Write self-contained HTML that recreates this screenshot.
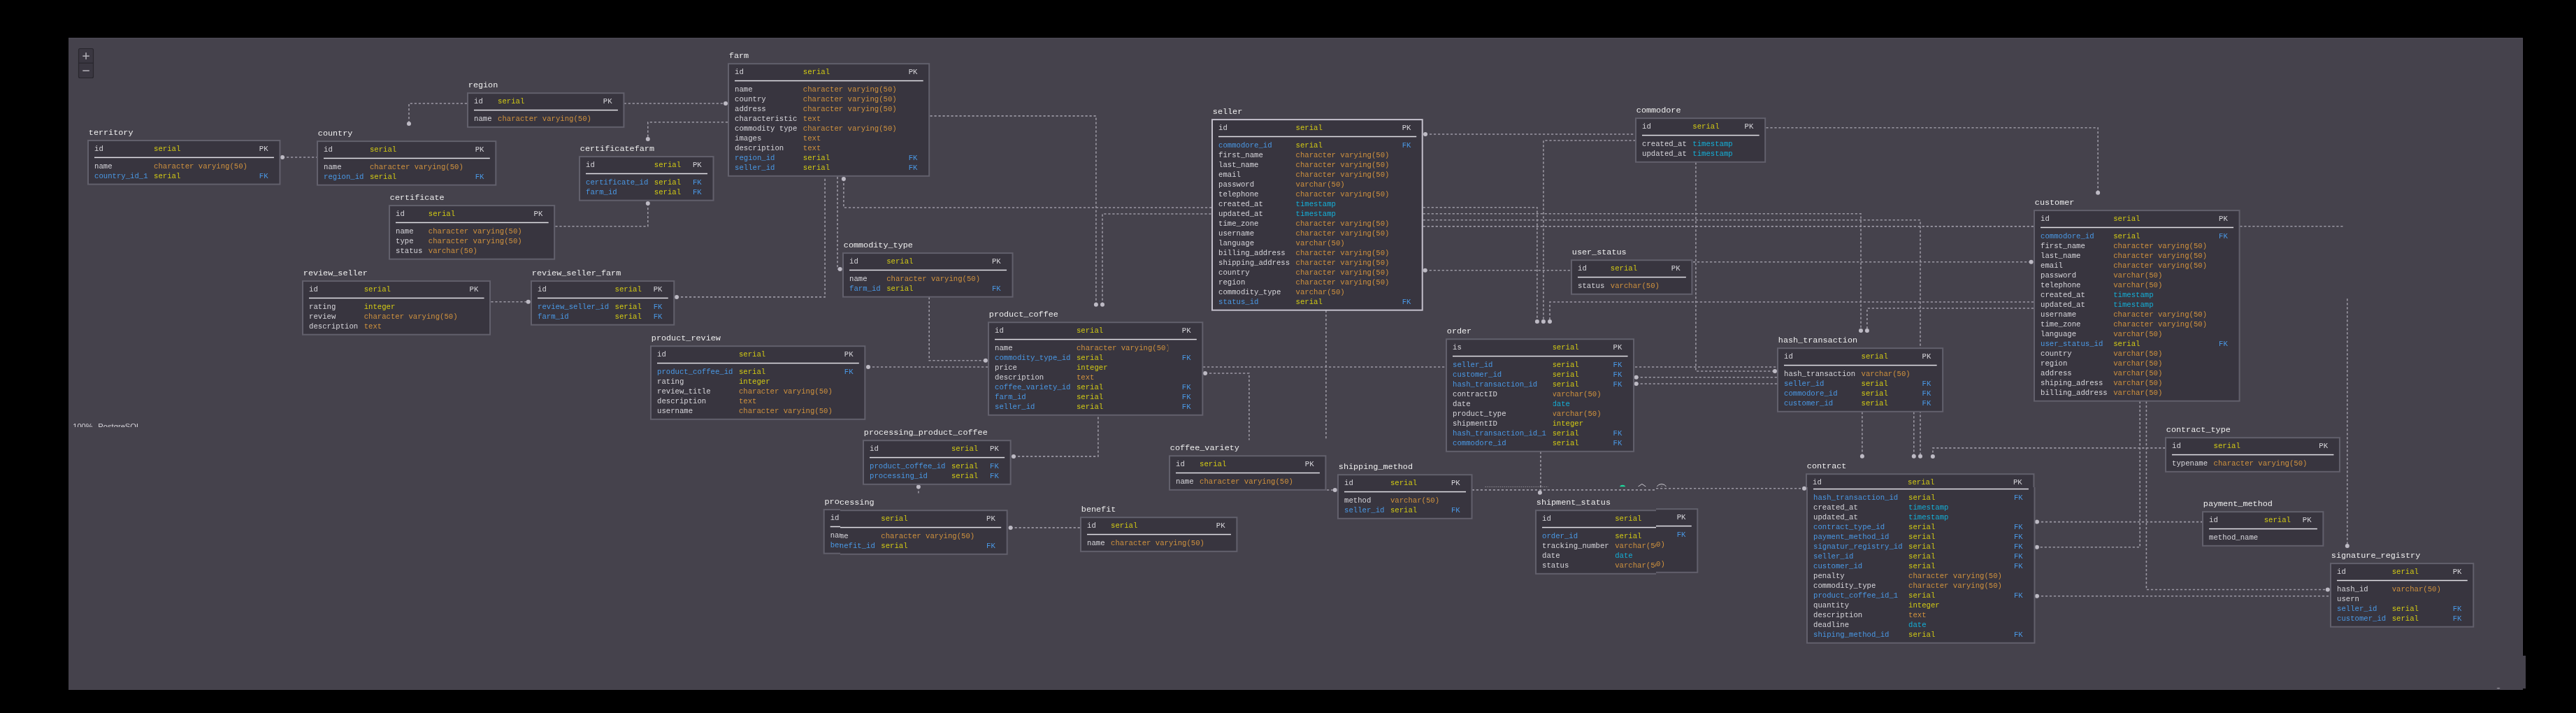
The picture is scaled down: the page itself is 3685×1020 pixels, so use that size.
<!DOCTYPE html>
<html><head><meta charset="utf-8"><style>
html,body{margin:0;padding:0;background:#000;overflow:hidden;}
svg{display:block;will-change:transform;}
text{font-family:"Liberation Mono",monospace;font-size:10.63px;white-space:pre;}
.tt{font-size:11.8px;fill:#eeeeee;}
</style></head><body>
<svg width="3685" height="1020" viewBox="0 0 3685 1020">
<rect x="0" y="0" width="3685" height="1020" fill="#000"/>
<rect x="98" y="54" width="3511" height="933" fill="#45424c"/>
<path d="M98 54.5 H3608.5 V938" fill="none" stroke="#4e4a56" stroke-width="1"/>
<ellipse cx="3574" cy="984.6" rx="2.5" ry="0.8" fill="#8e8b95"/>
<rect x="3609" y="938" width="4" height="47" fill="#45424c"/>
<g>
<rect x="112.5" y="69.5" width="21" height="42" rx="2" fill="#3a3741" stroke="#28262d" stroke-width="1.2"/>
<line x1="112.5" y1="90.2" x2="133.5" y2="90.2" stroke="#28262d" stroke-width="1.2"/>
<rect x="118.3" y="79.4" width="9.5" height="1.6" fill="#aeacb4"/><rect x="122.25" y="75.2" width="1.6" height="9.7" fill="#aeacb4"/>
<rect x="118.3" y="100.4" width="9.5" height="1.6" fill="#aeacb4"/>
</g>
<g fill="none" stroke="#9a97a2" stroke-width="1.6" stroke-dasharray="3.2 2.8"><path d="M404.0 225.0 L453.0 225.0"/>
<path d="M668.0 148.0 L585.0 148.0 L585.0 177.0"/>
<path d="M892.7 148.0 L1038.0 148.0"/>
<path d="M1041.0 174.8 L926.8 174.8 L926.8 199.0"/>
<path d="M926.8 291.0 L926.8 323.8 L793.6 323.8"/>
<path d="M702.4 431.8 L755.7 431.8"/>
<path d="M968.0 424.9 L1180.1 424.9 L1180.1 253.0"/>
<path d="M1198.0 253.0 L1198.0 385.0 L1201.7 385.0"/>
<path d="M1206.9 256.0 L1206.9 297.0 L1733.0 297.0"/>
<path d="M1329.2 425.0 L1329.2 515.8 L1409.9 515.8"/>
<path d="M1242.0 525.0 L1413.6 525.0"/>
<path d="M1450.0 652.9 L1570.9 652.9 L1570.9 594.0"/>
<path d="M1445.6 754.9 L1545.6 754.9"/>
<path d="M1313.9 696.4 L1313.9 708.0"/>
<path d="M1567.9 435.7 L1567.9 165.9 L1330.0 165.9"/>
<path d="M1577.0 435.7 L1577.0 306.0 L1733.0 306.0"/>
<path d="M1724.0 534.0 L1786.9 534.0 L1786.9 629.4"/>
<path d="M1896.9 444.0 L1896.9 627.8"/>
<path d="M1721.0 525.0 L2542.0 525.0"/>
<path d="M1898.0 701.0 L1909.7 701.0"/>
<path d="M2039.0 192.0 L2339.6 192.0"/>
<path d="M2038.7 386.8 L2247.5 386.8"/>
<path d="M2035.7 296.8 L2198.9 296.8 L2198.9 460.1"/>
<path d="M2339.6 201.0 L2207.9 201.0 L2207.9 460.1"/>
<path d="M2909.0 432.0 L2217.0 432.0 L2217.0 460.1"/>
<path d="M2035.7 305.8 L2662.0 305.8 L2662.0 473.1"/>
<path d="M2035.7 314.8 L2747.0 314.8 L2747.0 652.8"/>
<path d="M2035.7 323.9 L2909.0 323.9"/>
<path d="M2526.4 182.7 L3001.1 182.7 L3001.1 275.7"/>
<path d="M2422.0 374.8 L2905.6 374.8"/>
<path d="M2909.0 441.0 L2670.9 441.0 L2670.9 473.1"/>
<path d="M2425.9 232.2 L2425.9 531.0 L2539.0 531.0"/>
<path d="M2340.7 539.8 L2542.0 539.8"/>
<path d="M2340.7 549.0 L2542.0 549.0"/>
<path d="M2203.9 646.0 L2203.9 704.8"/>
<path d="M2105.8 700.9 L2369.0 700.9"/>
<path d="M2369.0 698.8 L2581.0 698.8"/>
<path d="M2663.9 589.3 L2663.9 652.8"/>
<path d="M2737.8 589.3 L2737.8 652.8"/>
<path d="M3097.4 640.9 L2764.9 640.9 L2764.9 652.9"/>
<path d="M3061.2 574.0 L3061.2 782.7 L2913.9 782.7"/>
<path d="M3070.4 574.0 L3070.4 843.5 L3329.8 843.5"/>
<path d="M2913.9 746.6 L3150.7 746.6"/>
<path d="M2913.9 852.8 L3333.4 852.8"/>
<path d="M3204.3 323.8 L3352.0 323.8"/>
<path d="M3357.8 427.2 L3357.8 780.9"/></g>
<g fill="#bdbac4"><circle cx="404.0" cy="225.0" r="3"/><circle cx="585.0" cy="177.0" r="3"/><circle cx="1038.0" cy="148.0" r="3"/><circle cx="926.8" cy="199.0" r="3"/><circle cx="926.8" cy="291.0" r="3"/><circle cx="755.7" cy="431.8" r="3"/><circle cx="968.0" cy="424.9" r="3"/><circle cx="1201.7" cy="385.0" r="3"/><circle cx="1206.9" cy="256.0" r="3"/><circle cx="1409.9" cy="515.8" r="3"/><circle cx="1242.0" cy="525.0" r="3"/><circle cx="1450.0" cy="652.9" r="3"/><circle cx="1445.6" cy="754.9" r="3"/><circle cx="1313.9" cy="696.4" r="3"/><circle cx="1567.9" cy="435.7" r="3"/><circle cx="1577.0" cy="435.7" r="3"/><circle cx="1724.0" cy="534.0" r="3"/><circle cx="1909.7" cy="701.0" r="3"/><circle cx="2039.0" cy="192.0" r="3"/><circle cx="2038.7" cy="386.8" r="3"/><circle cx="2198.9" cy="460.1" r="3"/><circle cx="2207.9" cy="460.1" r="3"/><circle cx="2217.0" cy="460.1" r="3"/><circle cx="2662.0" cy="473.1" r="3"/><circle cx="2747.0" cy="652.8" r="3"/><circle cx="3001.1" cy="275.7" r="3"/><circle cx="2905.6" cy="374.8" r="3"/><circle cx="2670.9" cy="473.1" r="3"/><circle cx="2539.0" cy="531.0" r="3"/><circle cx="2340.7" cy="539.8" r="3"/><circle cx="2340.7" cy="549.0" r="3"/><circle cx="2202.9" cy="704.8" r="3"/><circle cx="2581.0" cy="698.8" r="3"/><circle cx="2663.9" cy="652.8" r="3"/><circle cx="2737.8" cy="652.8" r="3"/><circle cx="2764.9" cy="652.9" r="3"/><circle cx="2913.9" cy="782.7" r="3"/><circle cx="3329.8" cy="843.5" r="3"/><circle cx="2913.9" cy="746.6" r="3"/><circle cx="2913.9" cy="852.8" r="3"/><circle cx="3357.8" cy="780.9" r="3"/></g>
<g>
<rect x="126.00" y="201.00" width="274.43" height="62.60" fill="#38353f" stroke="#62606c" stroke-width="2"/>
<text x="126.80" y="193.00" class="tt">territory</text>
<text x="135.00" y="215.80" fill="#d6d5da">id</text>
<text x="220.04" y="215.80" fill="#d2ca14">serial</text>
<text x="370.87" y="215.80" fill="#d6d5da">PK</text>
<rect x="135.00" y="224.60" width="256.93" height="1.5" fill="#e2e0e6"/>
<text x="135.00" y="240.70" fill="#d6d5da">name</text>
<text x="220.04" y="240.70" fill="#d0923e">character varying(50)</text>
<text x="135.00" y="254.70" fill="#4a98e4">country_id_1</text>
<text x="220.04" y="254.70" fill="#d2ca14">serial</text>
<text x="370.87" y="254.70" fill="#4a98e4">FK</text>
</g>
<g>
<rect x="454.00" y="202.10" width="255.30" height="62.60" fill="#38353f" stroke="#62606c" stroke-width="2"/>
<text x="454.80" y="194.10" class="tt">country</text>
<text x="463.00" y="216.90" fill="#d6d5da">id</text>
<text x="528.90" y="216.90" fill="#d2ca14">serial</text>
<text x="679.74" y="216.90" fill="#d6d5da">PK</text>
<rect x="463.00" y="225.70" width="237.80" height="1.5" fill="#e2e0e6"/>
<text x="463.00" y="241.80" fill="#d6d5da">name</text>
<text x="528.90" y="241.80" fill="#d0923e">character varying(50)</text>
<text x="463.00" y="255.80" fill="#4a98e4">region_id</text>
<text x="528.90" y="255.80" fill="#d2ca14">serial</text>
<text x="679.74" y="255.80" fill="#4a98e4">FK</text>
</g>
<g>
<rect x="669.00" y="133.20" width="223.41" height="48.60" fill="#38353f" stroke="#62606c" stroke-width="2"/>
<text x="669.80" y="125.20" class="tt">region</text>
<text x="678.00" y="148.00" fill="#d6d5da">id</text>
<text x="712.01" y="148.00" fill="#d2ca14">serial</text>
<text x="862.85" y="148.00" fill="#d6d5da">PK</text>
<rect x="678.00" y="156.80" width="205.91" height="1.5" fill="#e2e0e6"/>
<text x="678.00" y="172.90" fill="#d6d5da">name</text>
<text x="712.01" y="172.90" fill="#d0923e">character varying(50)</text>
</g>
<g>
<rect x="1042.00" y="91.20" width="287.19" height="160.60" fill="#38353f" stroke="#62606c" stroke-width="2"/>
<text x="1042.80" y="83.20" class="tt">farm</text>
<text x="1051.00" y="106.00" fill="#d6d5da">id</text>
<text x="1148.79" y="106.00" fill="#d2ca14">serial</text>
<text x="1299.63" y="106.00" fill="#d6d5da">PK</text>
<rect x="1051.00" y="114.80" width="269.69" height="1.5" fill="#e2e0e6"/>
<text x="1051.00" y="130.90" fill="#d6d5da">name</text>
<text x="1148.79" y="130.90" fill="#d0923e">character varying(50)</text>
<text x="1051.00" y="144.90" fill="#d6d5da">country</text>
<text x="1148.79" y="144.90" fill="#d0923e">character varying(50)</text>
<text x="1051.00" y="158.90" fill="#d6d5da">address</text>
<text x="1148.79" y="158.90" fill="#d0923e">character varying(50)</text>
<text x="1051.00" y="172.90" fill="#d6d5da">characteristic</text>
<text x="1148.79" y="172.90" fill="#d0923e">text</text>
<text x="1051.00" y="186.90" fill="#d6d5da">commodity type</text>
<text x="1148.79" y="186.90" fill="#d0923e">character varying(50)</text>
<text x="1051.00" y="200.90" fill="#d6d5da">images</text>
<text x="1148.79" y="200.90" fill="#d0923e">text</text>
<text x="1051.00" y="214.90" fill="#d6d5da">description</text>
<text x="1148.79" y="214.90" fill="#d0923e">text</text>
<text x="1051.00" y="228.90" fill="#4a98e4">region_id</text>
<text x="1148.79" y="228.90" fill="#d2ca14">serial</text>
<text x="1299.63" y="228.90" fill="#4a98e4">FK</text>
<text x="1051.00" y="242.90" fill="#4a98e4">seller_id</text>
<text x="1148.79" y="242.90" fill="#d2ca14">serial</text>
<text x="1299.63" y="242.90" fill="#4a98e4">FK</text>
</g>
<g>
<rect x="829.00" y="224.10" width="191.52" height="62.60" fill="#38353f" stroke="#62606c" stroke-width="2"/>
<text x="829.80" y="216.10" class="tt">certificatefarm</text>
<text x="838.00" y="238.90" fill="#d6d5da">id</text>
<text x="935.79" y="238.90" fill="#d2ca14">serial</text>
<text x="990.96" y="238.90" fill="#d6d5da">PK</text>
<rect x="838.00" y="247.70" width="174.02" height="1.5" fill="#e2e0e6"/>
<text x="838.00" y="263.80" fill="#4a98e4">certificate_id</text>
<text x="935.79" y="263.80" fill="#d2ca14">serial</text>
<text x="990.96" y="263.80" fill="#4a98e4">FK</text>
<text x="838.00" y="277.80" fill="#4a98e4">farm_id</text>
<text x="935.79" y="277.80" fill="#d2ca14">serial</text>
<text x="990.96" y="277.80" fill="#4a98e4">FK</text>
</g>
<g>
<rect x="557.00" y="294.10" width="236.16" height="76.60" fill="#38353f" stroke="#62606c" stroke-width="2"/>
<text x="557.80" y="286.10" class="tt">certificate</text>
<text x="566.00" y="308.90" fill="#d6d5da">id</text>
<text x="612.77" y="308.90" fill="#d2ca14">serial</text>
<text x="763.61" y="308.90" fill="#d6d5da">PK</text>
<rect x="566.00" y="317.70" width="218.66" height="1.5" fill="#e2e0e6"/>
<text x="566.00" y="333.80" fill="#d6d5da">name</text>
<text x="612.77" y="333.80" fill="#d0923e">character varying(50)</text>
<text x="566.00" y="347.80" fill="#d6d5da">type</text>
<text x="612.77" y="347.80" fill="#d0923e">character varying(50)</text>
<text x="566.00" y="361.80" fill="#d6d5da">status</text>
<text x="612.77" y="361.80" fill="#d0923e">varchar(50)</text>
</g>
<g>
<rect x="433.00" y="402.10" width="268.05" height="76.60" fill="#38353f" stroke="#62606c" stroke-width="2"/>
<text x="433.80" y="394.10" class="tt">review_seller</text>
<text x="442.00" y="416.90" fill="#d6d5da">id</text>
<text x="520.66" y="416.90" fill="#d2ca14">serial</text>
<text x="671.50" y="416.90" fill="#d6d5da">PK</text>
<rect x="442.00" y="425.70" width="250.55" height="1.5" fill="#e2e0e6"/>
<text x="442.00" y="441.80" fill="#d6d5da">rating</text>
<text x="520.66" y="441.80" fill="#d2ca14">integer</text>
<text x="442.00" y="455.80" fill="#d6d5da">review</text>
<text x="520.66" y="455.80" fill="#d0923e">character varying(50)</text>
<text x="442.00" y="469.80" fill="#d6d5da">description</text>
<text x="520.66" y="469.80" fill="#d0923e">text</text>
</g>
<g>
<rect x="760.00" y="402.10" width="204.27" height="62.60" fill="#38353f" stroke="#62606c" stroke-width="2"/>
<text x="760.80" y="394.10" class="tt">review_seller_farm</text>
<text x="769.00" y="416.90" fill="#d6d5da">id</text>
<text x="879.55" y="416.90" fill="#d2ca14">serial</text>
<text x="934.72" y="416.90" fill="#d6d5da">PK</text>
<rect x="769.00" y="425.70" width="186.77" height="1.5" fill="#e2e0e6"/>
<text x="769.00" y="441.80" fill="#4a98e4">review_seller_id</text>
<text x="879.55" y="441.80" fill="#d2ca14">serial</text>
<text x="934.72" y="441.80" fill="#4a98e4">FK</text>
<text x="769.00" y="455.80" fill="#4a98e4">farm_id</text>
<text x="879.55" y="455.80" fill="#d2ca14">serial</text>
<text x="934.72" y="455.80" fill="#4a98e4">FK</text>
</g>
<g>
<rect x="1206.00" y="362.10" width="242.54" height="62.60" fill="#38353f" stroke="#62606c" stroke-width="2"/>
<text x="1206.80" y="354.10" class="tt">commodity_type</text>
<text x="1215.00" y="376.90" fill="#d6d5da">id</text>
<text x="1268.15" y="376.90" fill="#d2ca14">serial</text>
<text x="1418.98" y="376.90" fill="#d6d5da">PK</text>
<rect x="1215.00" y="385.70" width="225.04" height="1.5" fill="#e2e0e6"/>
<text x="1215.00" y="401.80" fill="#d6d5da">name</text>
<text x="1268.15" y="401.80" fill="#d0923e">character varying(50)</text>
<text x="1215.00" y="415.80" fill="#4a98e4">farm_id</text>
<text x="1268.15" y="415.80" fill="#d2ca14">serial</text>
<text x="1418.98" y="415.80" fill="#4a98e4">FK</text>
</g>
<g>
<rect x="931.00" y="495.20" width="306.32" height="104.60" fill="#38353f" stroke="#62606c" stroke-width="2"/>
<text x="931.80" y="487.20" class="tt">product_review</text>
<text x="940.00" y="510.00" fill="#d6d5da">id</text>
<text x="1056.93" y="510.00" fill="#d2ca14">serial</text>
<text x="1207.76" y="510.00" fill="#d6d5da">PK</text>
<rect x="940.00" y="518.80" width="288.82" height="1.5" fill="#e2e0e6"/>
<text x="940.00" y="534.90" fill="#4a98e4">product_coffee_id</text>
<text x="1056.93" y="534.90" fill="#d2ca14">serial</text>
<text x="1207.76" y="534.90" fill="#4a98e4">FK</text>
<text x="940.00" y="548.90" fill="#d6d5da">rating</text>
<text x="1056.93" y="548.90" fill="#d2ca14">integer</text>
<text x="940.00" y="562.90" fill="#d6d5da">review_title</text>
<text x="1056.93" y="562.90" fill="#d0923e">character varying(50)</text>
<text x="940.00" y="576.90" fill="#d6d5da">description</text>
<text x="1056.93" y="576.90" fill="#d0923e">text</text>
<text x="940.00" y="590.90" fill="#d6d5da">username</text>
<text x="1056.93" y="590.90" fill="#d0923e">character varying(50)</text>
</g>
<g>
<rect x="1414.00" y="461.20" width="306.32" height="132.60" fill="#38353f" stroke="#62606c" stroke-width="2"/>
<text x="1414.80" y="453.20" class="tt">product_coffee</text>
<text x="1423.00" y="476.00" fill="#d6d5da">id</text>
<text x="1539.93" y="476.00" fill="#d2ca14">serial</text>
<text x="1690.76" y="476.00" fill="#d6d5da">PK</text>
<rect x="1423.00" y="484.80" width="288.82" height="1.5" fill="#e2e0e6"/>
<text x="1423.00" y="500.90" fill="#d6d5da">name</text>
<text x="1539.93" y="500.90" fill="#d0923e">character varying(50)</text>
<text x="1423.00" y="514.90" fill="#4a98e4">commodity_type_id</text>
<text x="1539.93" y="514.90" fill="#d2ca14">serial</text>
<text x="1690.76" y="514.90" fill="#4a98e4">FK</text>
<text x="1423.00" y="528.90" fill="#d6d5da">price</text>
<text x="1539.93" y="528.90" fill="#d2ca14">integer</text>
<text x="1423.00" y="542.90" fill="#d6d5da">description</text>
<text x="1539.93" y="542.90" fill="#d0923e">text</text>
<text x="1423.00" y="556.90" fill="#4a98e4">coffee_variety_id</text>
<text x="1539.93" y="556.90" fill="#d2ca14">serial</text>
<text x="1690.76" y="556.90" fill="#4a98e4">FK</text>
<text x="1423.00" y="570.90" fill="#4a98e4">farm_id</text>
<text x="1539.93" y="570.90" fill="#d2ca14">serial</text>
<text x="1690.76" y="570.90" fill="#4a98e4">FK</text>
<text x="1423.00" y="584.90" fill="#4a98e4">seller_id</text>
<text x="1539.93" y="584.90" fill="#d2ca14">serial</text>
<text x="1690.76" y="584.90" fill="#4a98e4">FK</text>
</g>
<g>
<rect x="1235.00" y="630.20" width="210.65" height="62.60" fill="#38353f" stroke="#62606c" stroke-width="2"/>
<text x="1235.80" y="622.20" class="tt">processing_product_coffee</text>
<text x="1244.00" y="645.00" fill="#d6d5da">id</text>
<text x="1360.93" y="645.00" fill="#d2ca14">serial</text>
<text x="1416.09" y="645.00" fill="#d6d5da">PK</text>
<rect x="1244.00" y="653.80" width="193.15" height="1.5" fill="#e2e0e6"/>
<text x="1244.00" y="669.90" fill="#4a98e4">product_coffee_id</text>
<text x="1360.93" y="669.90" fill="#d2ca14">serial</text>
<text x="1416.09" y="669.90" fill="#4a98e4">FK</text>
<text x="1244.00" y="683.90" fill="#4a98e4">processing_id</text>
<text x="1360.93" y="683.90" fill="#d2ca14">serial</text>
<text x="1416.09" y="683.90" fill="#4a98e4">FK</text>
</g>
<defs><g id="t_processing">
<rect x="1179.00" y="730.20" width="261.67" height="62.60" fill="#38353f" stroke="#62606c" stroke-width="2"/>
<text x="1179.80" y="722.20" class="tt">processing</text>
<text x="1188.00" y="745.00" fill="#d6d5da">id</text>
<text x="1260.28" y="745.00" fill="#d2ca14">serial</text>
<text x="1411.12" y="745.00" fill="#d6d5da">PK</text>
<rect x="1188.00" y="753.80" width="244.17" height="1.5" fill="#e2e0e6"/>
<text x="1188.00" y="769.90" fill="#d6d5da">name</text>
<text x="1260.28" y="769.90" fill="#d0923e">character varying(50)</text>
<text x="1188.00" y="783.90" fill="#4a98e4">benefit_id</text>
<text x="1260.28" y="783.90" fill="#d2ca14">serial</text>
<text x="1411.12" y="783.90" fill="#4a98e4">FK</text>
</g></defs>
<clipPath id="t_processing_c0"><rect x="1100" y="650" width="102" height="200"/></clipPath>
<g clip-path="url(#t_processing_c0)"><use href="#t_processing" transform="translate(-0.3 -1.1)"/></g>
<clipPath id="t_processing_c1"><rect x="1202" y="650" width="300" height="200"/></clipPath>
<g clip-path="url(#t_processing_c1)"><use href="#t_processing" transform="translate(0 0)"/></g>
<g>
<rect x="1546.00" y="740.20" width="223.41" height="48.60" fill="#38353f" stroke="#62606c" stroke-width="2"/>
<text x="1546.80" y="732.20" class="tt">benefit</text>
<text x="1555.00" y="755.00" fill="#d6d5da">id</text>
<text x="1589.01" y="755.00" fill="#d2ca14">serial</text>
<text x="1739.85" y="755.00" fill="#d6d5da">PK</text>
<rect x="1555.00" y="763.80" width="205.91" height="1.5" fill="#e2e0e6"/>
<text x="1555.00" y="779.90" fill="#d6d5da">name</text>
<text x="1589.01" y="779.90" fill="#d0923e">character varying(50)</text>
</g>
<g>
<rect x="1673.00" y="652.20" width="223.41" height="48.60" fill="#38353f" stroke="#62606c" stroke-width="2"/>
<text x="1673.80" y="644.20" class="tt">coffee_variety</text>
<text x="1682.00" y="667.00" fill="#d6d5da">id</text>
<text x="1716.01" y="667.00" fill="#d2ca14">serial</text>
<text x="1866.85" y="667.00" fill="#d6d5da">PK</text>
<rect x="1682.00" y="675.80" width="205.91" height="1.5" fill="#e2e0e6"/>
<text x="1682.00" y="691.90" fill="#d6d5da">name</text>
<text x="1716.01" y="691.90" fill="#d0923e">character varying(50)</text>
</g>
<g>
<rect x="1914.00" y="679.20" width="191.52" height="62.60" fill="#38353f" stroke="#62606c" stroke-width="2"/>
<text x="1914.80" y="671.20" class="tt">shipping_method</text>
<text x="1923.00" y="694.00" fill="#d6d5da">id</text>
<text x="1988.90" y="694.00" fill="#d2ca14">serial</text>
<text x="2075.96" y="694.00" fill="#d6d5da">PK</text>
<rect x="1923.00" y="702.80" width="174.02" height="1.5" fill="#e2e0e6"/>
<text x="1923.00" y="718.90" fill="#d6d5da">method</text>
<text x="1988.90" y="718.90" fill="#d0923e">varchar(50)</text>
<text x="1923.00" y="732.90" fill="#4a98e4">seller_id</text>
<text x="1988.90" y="732.90" fill="#d2ca14">serial</text>
<text x="2075.96" y="732.90" fill="#4a98e4">FK</text>
</g>
<g>
<rect x="1734.00" y="171.10" width="300.70" height="272.60" fill="#38353f" stroke="#c4c0cc" stroke-width="2"/>
<text x="1734.80" y="163.10" class="tt">seller</text>
<text x="1743.00" y="185.90" fill="#d6d5da">id</text>
<text x="1853.55" y="185.90" fill="#d2ca14">serial</text>
<text x="2005.70" y="185.90" fill="#d6d5da">PK</text>
<rect x="1743.00" y="194.70" width="283.20" height="1.5" fill="#e2e0e6"/>
<text x="1743.00" y="210.80" fill="#4a98e4">commodore_id</text>
<text x="1853.55" y="210.80" fill="#d2ca14">serial</text>
<text x="2005.70" y="210.80" fill="#4a98e4">FK</text>
<text x="1743.00" y="224.80" fill="#d6d5da">first_name</text>
<text x="1853.55" y="224.80" fill="#d0923e">character varying(50)</text>
<text x="1743.00" y="238.80" fill="#d6d5da">last_name</text>
<text x="1853.55" y="238.80" fill="#d0923e">character varying(50)</text>
<text x="1743.00" y="252.80" fill="#d6d5da">email</text>
<text x="1853.55" y="252.80" fill="#d0923e">character varying(50)</text>
<text x="1743.00" y="266.80" fill="#d6d5da">password</text>
<text x="1853.55" y="266.80" fill="#d0923e">varchar(50)</text>
<text x="1743.00" y="280.80" fill="#d6d5da">telephone</text>
<text x="1853.55" y="280.80" fill="#d0923e">character varying(50)</text>
<text x="1743.00" y="294.80" fill="#d6d5da">created_at</text>
<text x="1853.55" y="294.80" fill="#14aed6">timestamp</text>
<text x="1743.00" y="308.80" fill="#d6d5da">updated_at</text>
<text x="1853.55" y="308.80" fill="#14aed6">timestamp</text>
<text x="1743.00" y="322.80" fill="#d6d5da">time_zone</text>
<text x="1853.55" y="322.80" fill="#d0923e">character varying(50)</text>
<text x="1743.00" y="336.80" fill="#d6d5da">username</text>
<text x="1853.55" y="336.80" fill="#d0923e">character varying(50)</text>
<text x="1743.00" y="350.80" fill="#d6d5da">language</text>
<text x="1853.55" y="350.80" fill="#d0923e">varchar(50)</text>
<text x="1743.00" y="364.80" fill="#d6d5da">billing_address</text>
<text x="1853.55" y="364.80" fill="#d0923e">character varying(50)</text>
<text x="1743.00" y="378.80" fill="#d6d5da">shipping_address</text>
<text x="1853.55" y="378.80" fill="#d0923e">character varying(50)</text>
<text x="1743.00" y="392.80" fill="#d6d5da">country</text>
<text x="1853.55" y="392.80" fill="#d0923e">character varying(50)</text>
<text x="1743.00" y="406.80" fill="#d6d5da">region</text>
<text x="1853.55" y="406.80" fill="#d0923e">character varying(50)</text>
<text x="1743.00" y="420.80" fill="#d6d5da">commodity_type</text>
<text x="1853.55" y="420.80" fill="#d0923e">varchar(50)</text>
<text x="1743.00" y="434.80" fill="#4a98e4">status_id</text>
<text x="1853.55" y="434.80" fill="#d2ca14">serial</text>
<text x="2005.70" y="434.80" fill="#4a98e4">FK</text>
</g>
<g>
<rect x="2069.00" y="485.20" width="268.05" height="160.60" fill="#38353f" stroke="#62606c" stroke-width="2"/>
<text x="2069.80" y="477.20" class="tt">order</text>
<text x="2078.00" y="500.00" fill="#d6d5da">is</text>
<text x="2220.44" y="500.00" fill="#d2ca14">serial</text>
<text x="2307.50" y="500.00" fill="#d6d5da">PK</text>
<rect x="2078.00" y="508.80" width="250.55" height="1.5" fill="#e2e0e6"/>
<text x="2078.00" y="524.90" fill="#4a98e4">seller_id</text>
<text x="2220.44" y="524.90" fill="#d2ca14">serial</text>
<text x="2307.50" y="524.90" fill="#4a98e4">FK</text>
<text x="2078.00" y="538.90" fill="#4a98e4">customer_id</text>
<text x="2220.44" y="538.90" fill="#d2ca14">serial</text>
<text x="2307.50" y="538.90" fill="#4a98e4">FK</text>
<text x="2078.00" y="552.90" fill="#4a98e4">hash_transaction_id</text>
<text x="2220.44" y="552.90" fill="#d2ca14">serial</text>
<text x="2307.50" y="552.90" fill="#4a98e4">FK</text>
<text x="2078.00" y="566.90" fill="#d6d5da">contractID</text>
<text x="2220.44" y="566.90" fill="#d0923e">varchar(50)</text>
<text x="2078.00" y="580.90" fill="#d6d5da">date</text>
<text x="2220.44" y="580.90" fill="#14aed6">date</text>
<text x="2078.00" y="594.90" fill="#d6d5da">product_type</text>
<text x="2220.44" y="594.90" fill="#d0923e">varchar(50)</text>
<text x="2078.00" y="608.90" fill="#d6d5da">shipmentID</text>
<text x="2220.44" y="608.90" fill="#d2ca14">integer</text>
<text x="2078.00" y="622.90" fill="#4a98e4">hash_transaction_id_1</text>
<text x="2220.44" y="622.90" fill="#d2ca14">serial</text>
<text x="2307.50" y="622.90" fill="#4a98e4">FK</text>
<text x="2078.00" y="636.90" fill="#4a98e4">commodore_id</text>
<text x="2220.44" y="636.90" fill="#d2ca14">serial</text>
<text x="2307.50" y="636.90" fill="#4a98e4">FK</text>
</g>
<defs><g id="t_shipment_status">
<rect x="2197.00" y="730.20" width="229.78" height="90.60" fill="#38353f" stroke="#62606c" stroke-width="2"/>
<text x="2197.80" y="722.20" class="tt">shipment_status</text>
<text x="2206.00" y="745.00" fill="#d6d5da">id</text>
<text x="2310.17" y="745.00" fill="#d2ca14">serial</text>
<text x="2397.23" y="745.00" fill="#d6d5da">PK</text>
<rect x="2206.00" y="753.80" width="212.28" height="1.5" fill="#e2e0e6"/>
<text x="2206.00" y="769.90" fill="#4a98e4">order_id</text>
<text x="2310.17" y="769.90" fill="#d2ca14">serial</text>
<text x="2397.23" y="769.90" fill="#4a98e4">FK</text>
<text x="2206.00" y="783.90" fill="#d6d5da">tracking_number</text>
<text x="2310.17" y="783.90" fill="#d0923e">varchar(50)</text>
<text x="2206.00" y="797.90" fill="#d6d5da">date</text>
<text x="2310.17" y="797.90" fill="#14aed6">date</text>
<text x="2206.00" y="811.90" fill="#d6d5da">status</text>
<text x="2310.17" y="811.90" fill="#d0923e">varchar(50)</text>
</g></defs>
<clipPath id="t_shipment_status_c0"><rect x="2100" y="600" width="269" height="300"/></clipPath>
<g clip-path="url(#t_shipment_status_c0)"><use href="#t_shipment_status" transform="translate(0 0)"/></g>
<clipPath id="t_shipment_status_c1"><rect x="2369" y="600" width="200" height="300"/></clipPath>
<g clip-path="url(#t_shipment_status_c1)"><use href="#t_shipment_status" transform="translate(1.5 -2)"/></g>
<g>
<rect x="2340.00" y="169.20" width="185.14" height="62.60" fill="#38353f" stroke="#62606c" stroke-width="2"/>
<text x="2340.80" y="161.20" class="tt">commodore</text>
<text x="2349.00" y="184.00" fill="#d6d5da">id</text>
<text x="2421.28" y="184.00" fill="#d2ca14">serial</text>
<text x="2495.58" y="184.00" fill="#d6d5da">PK</text>
<rect x="2349.00" y="192.80" width="167.64" height="1.5" fill="#e2e0e6"/>
<text x="2349.00" y="208.90" fill="#d6d5da">created_at</text>
<text x="2421.28" y="208.90" fill="#14aed6">timestamp</text>
<text x="2349.00" y="222.90" fill="#d6d5da">updated_at</text>
<text x="2421.28" y="222.90" fill="#14aed6">timestamp</text>
</g>
<g>
<rect x="2248.00" y="372.20" width="172.38" height="48.60" fill="#38353f" stroke="#62606c" stroke-width="2"/>
<text x="2248.80" y="364.20" class="tt">user_status</text>
<text x="2257.00" y="387.00" fill="#d6d5da">id</text>
<text x="2303.77" y="387.00" fill="#d2ca14">serial</text>
<text x="2390.83" y="387.00" fill="#d6d5da">PK</text>
<rect x="2257.00" y="395.80" width="154.88" height="1.5" fill="#e2e0e6"/>
<text x="2257.00" y="411.90" fill="#d6d5da">status</text>
<text x="2303.77" y="411.90" fill="#d0923e">varchar(50)</text>
</g>
<g>
<rect x="2543.00" y="498.20" width="236.16" height="90.60" fill="#38353f" stroke="#62606c" stroke-width="2"/>
<text x="2543.80" y="490.20" class="tt">hash_transaction</text>
<text x="2552.00" y="513.00" fill="#d6d5da">id</text>
<text x="2662.55" y="513.00" fill="#d2ca14">serial</text>
<text x="2749.61" y="513.00" fill="#d6d5da">PK</text>
<rect x="2552.00" y="521.80" width="218.66" height="1.5" fill="#e2e0e6"/>
<text x="2552.00" y="537.90" fill="#d6d5da">hash_transaction</text>
<text x="2662.55" y="537.90" fill="#d0923e">varchar(50)</text>
<text x="2552.00" y="551.90" fill="#4a98e4">seller_id</text>
<text x="2662.55" y="551.90" fill="#d2ca14">serial</text>
<text x="2749.61" y="551.90" fill="#4a98e4">FK</text>
<text x="2552.00" y="565.90" fill="#4a98e4">commodore_id</text>
<text x="2662.55" y="565.90" fill="#d2ca14">serial</text>
<text x="2749.61" y="565.90" fill="#4a98e4">FK</text>
<text x="2552.00" y="579.90" fill="#4a98e4">customer_id</text>
<text x="2662.55" y="579.90" fill="#d2ca14">serial</text>
<text x="2749.61" y="579.90" fill="#4a98e4">FK</text>
</g>
<g>
<rect x="2910.00" y="301.10" width="293.56" height="272.60" fill="#38353f" stroke="#62606c" stroke-width="2"/>
<text x="2910.80" y="293.10" class="tt">customer</text>
<text x="2919.00" y="315.90" fill="#d6d5da">id</text>
<text x="3023.17" y="315.90" fill="#d2ca14">serial</text>
<text x="3174.01" y="315.90" fill="#d6d5da">PK</text>
<rect x="2919.00" y="324.70" width="276.06" height="1.5" fill="#e2e0e6"/>
<text x="2919.00" y="340.80" fill="#4a98e4">commodore_id</text>
<text x="3023.17" y="340.80" fill="#d2ca14">serial</text>
<text x="3174.01" y="340.80" fill="#4a98e4">FK</text>
<text x="2919.00" y="354.80" fill="#d6d5da">first_name</text>
<text x="3023.17" y="354.80" fill="#d0923e">character varying(50)</text>
<text x="2919.00" y="368.80" fill="#d6d5da">last_name</text>
<text x="3023.17" y="368.80" fill="#d0923e">character varying(50)</text>
<text x="2919.00" y="382.80" fill="#d6d5da">email</text>
<text x="3023.17" y="382.80" fill="#d0923e">character varying(50)</text>
<text x="2919.00" y="396.80" fill="#d6d5da">password</text>
<text x="3023.17" y="396.80" fill="#d0923e">varchar(50)</text>
<text x="2919.00" y="410.80" fill="#d6d5da">telephone</text>
<text x="3023.17" y="410.80" fill="#d0923e">varchar(50)</text>
<text x="2919.00" y="424.80" fill="#d6d5da">created_at</text>
<text x="3023.17" y="424.80" fill="#14aed6">timestamp</text>
<text x="2919.00" y="438.80" fill="#d6d5da">updated_at</text>
<text x="3023.17" y="438.80" fill="#14aed6">timestamp</text>
<text x="2919.00" y="452.80" fill="#d6d5da">username</text>
<text x="3023.17" y="452.80" fill="#d0923e">character varying(50)</text>
<text x="2919.00" y="466.80" fill="#d6d5da">time_zone</text>
<text x="3023.17" y="466.80" fill="#d0923e">character varying(50)</text>
<text x="2919.00" y="480.80" fill="#d6d5da">language</text>
<text x="3023.17" y="480.80" fill="#d0923e">varchar(50)</text>
<text x="2919.00" y="494.80" fill="#4a98e4">user_status_id</text>
<text x="3023.17" y="494.80" fill="#d2ca14">serial</text>
<text x="3174.01" y="494.80" fill="#4a98e4">FK</text>
<text x="2919.00" y="508.80" fill="#d6d5da">country</text>
<text x="3023.17" y="508.80" fill="#d0923e">varchar(50)</text>
<text x="2919.00" y="522.80" fill="#d6d5da">region</text>
<text x="3023.17" y="522.80" fill="#d0923e">varchar(50)</text>
<text x="2919.00" y="536.80" fill="#d6d5da">address</text>
<text x="3023.17" y="536.80" fill="#d0923e">varchar(50)</text>
<text x="2919.00" y="550.80" fill="#d6d5da">shiping_adress</text>
<text x="3023.17" y="550.80" fill="#d0923e">varchar(50)</text>
<text x="2919.00" y="564.80" fill="#d6d5da">billing_address</text>
<text x="3023.17" y="564.80" fill="#d0923e">varchar(50)</text>
</g>
<defs><g id="t_contract">
<rect x="2584.00" y="678.20" width="325.45" height="244.60" fill="#38353f" stroke="#62606c" stroke-width="2"/>
<text x="2584.80" y="670.20" class="tt">contract</text>
<text x="2593.00" y="693.00" fill="#d6d5da">id</text>
<text x="2729.06" y="693.00" fill="#d2ca14">serial</text>
<text x="2879.90" y="693.00" fill="#d6d5da">PK</text>
<rect x="2593.00" y="701.80" width="307.95" height="1.5" fill="#e2e0e6"/>
<text x="2593.00" y="717.90" fill="#4a98e4">hash_transaction_id</text>
<text x="2729.06" y="717.90" fill="#d2ca14">serial</text>
<text x="2879.90" y="717.90" fill="#4a98e4">FK</text>
<text x="2593.00" y="731.90" fill="#d6d5da">created_at</text>
<text x="2729.06" y="731.90" fill="#14aed6">timestamp</text>
<text x="2593.00" y="745.90" fill="#d6d5da">updated_at</text>
<text x="2729.06" y="745.90" fill="#14aed6">timestamp</text>
<text x="2593.00" y="759.90" fill="#4a98e4">contract_type_id</text>
<text x="2729.06" y="759.90" fill="#d2ca14">serial</text>
<text x="2879.90" y="759.90" fill="#4a98e4">FK</text>
<text x="2593.00" y="773.90" fill="#4a98e4">payment_method_id</text>
<text x="2729.06" y="773.90" fill="#d2ca14">serial</text>
<text x="2879.90" y="773.90" fill="#4a98e4">FK</text>
<text x="2593.00" y="787.90" fill="#4a98e4">signatur_registry_id</text>
<text x="2729.06" y="787.90" fill="#d2ca14">serial</text>
<text x="2879.90" y="787.90" fill="#4a98e4">FK</text>
<text x="2593.00" y="801.90" fill="#4a98e4">seller_id</text>
<text x="2729.06" y="801.90" fill="#d2ca14">serial</text>
<text x="2879.90" y="801.90" fill="#4a98e4">FK</text>
<text x="2593.00" y="815.90" fill="#4a98e4">customer_id</text>
<text x="2729.06" y="815.90" fill="#d2ca14">serial</text>
<text x="2879.90" y="815.90" fill="#4a98e4">FK</text>
<text x="2593.00" y="829.90" fill="#d6d5da">penalty</text>
<text x="2729.06" y="829.90" fill="#d0923e">character varying(50)</text>
<text x="2593.00" y="843.90" fill="#d6d5da">commodity_type</text>
<text x="2729.06" y="843.90" fill="#d0923e">character varying(50)</text>
<text x="2593.00" y="857.90" fill="#4a98e4">product_coffee_id_1</text>
<text x="2729.06" y="857.90" fill="#d2ca14">serial</text>
<text x="2879.90" y="857.90" fill="#4a98e4">FK</text>
<text x="2593.00" y="871.90" fill="#d6d5da">quantity</text>
<text x="2729.06" y="871.90" fill="#d2ca14">integer</text>
<text x="2593.00" y="885.90" fill="#d6d5da">description</text>
<text x="2729.06" y="885.90" fill="#d0923e">text</text>
<text x="2593.00" y="899.90" fill="#d6d5da">deadline</text>
<text x="2729.06" y="899.90" fill="#14aed6">date</text>
<text x="2593.00" y="913.90" fill="#4a98e4">shiping_method_id</text>
<text x="2729.06" y="913.90" fill="#d2ca14">serial</text>
<text x="2879.90" y="913.90" fill="#4a98e4">FK</text>
</g></defs>
<clipPath id="t_contract_c0"><rect x="2500" y="0" width="500" height="697"/></clipPath>
<g clip-path="url(#t_contract_c0)"><use href="#t_contract" transform="translate(0 0)"/></g>
<clipPath id="t_contract_c1"><rect x="2500" y="697" width="500" height="400"/></clipPath>
<g clip-path="url(#t_contract_c1)"><use href="#t_contract" transform="translate(1 -3)"/></g>
<g>
<rect x="3098.00" y="626.20" width="248.92" height="48.60" fill="#38353f" stroke="#62606c" stroke-width="2"/>
<text x="3098.80" y="618.20" class="tt">contract_type</text>
<text x="3107.00" y="641.00" fill="#d6d5da">id</text>
<text x="3166.52" y="641.00" fill="#d2ca14">serial</text>
<text x="3317.36" y="641.00" fill="#d6d5da">PK</text>
<rect x="3107.00" y="649.80" width="231.42" height="1.5" fill="#e2e0e6"/>
<text x="3107.00" y="665.90" fill="#d6d5da">typename</text>
<text x="3166.52" y="665.90" fill="#d0923e">character varying(50)</text>
</g>
<g>
<rect x="3151.00" y="732.20" width="172.38" height="48.60" fill="#38353f" stroke="#62606c" stroke-width="2"/>
<text x="3151.80" y="724.20" class="tt">payment_method</text>
<text x="3160.00" y="747.00" fill="#d6d5da">id</text>
<text x="3238.66" y="747.00" fill="#d2ca14">serial</text>
<text x="3293.83" y="747.00" fill="#d6d5da">PK</text>
<rect x="3160.00" y="755.80" width="154.88" height="1.5" fill="#e2e0e6"/>
<text x="3160.00" y="771.90" fill="#d6d5da">method_name</text>
</g>
<g>
<rect x="3334.00" y="806.10" width="204.27" height="90.60" fill="#38353f" stroke="#62606c" stroke-width="2"/>
<text x="3334.80" y="798.10" class="tt">signature_registry</text>
<text x="3343.00" y="820.90" fill="#d6d5da">id</text>
<text x="3421.66" y="820.90" fill="#d2ca14">serial</text>
<text x="3508.72" y="820.90" fill="#d6d5da">PK</text>
<rect x="3343.00" y="829.70" width="186.77" height="1.5" fill="#e2e0e6"/>
<text x="3343.00" y="845.80" fill="#d6d5da">hash_id</text>
<text x="3421.66" y="845.80" fill="#d0923e">varchar(50)</text>
<text x="3343.00" y="859.80" fill="#d6d5da">usern</text>
<text x="3343.00" y="873.80" fill="#4a98e4">seller_id</text>
<text x="3421.66" y="873.80" fill="#d2ca14">serial</text>
<text x="3508.72" y="873.80" fill="#4a98e4">FK</text>
<text x="3343.00" y="887.80" fill="#4a98e4">customer_id</text>
<text x="3421.66" y="887.80" fill="#d2ca14">serial</text>
<text x="3508.72" y="887.80" fill="#4a98e4">FK</text>
</g>
<g>
<clipPath id="icl"><rect x="2300" y="680" width="100" height="16.3"/></clipPath>
<g clip-path="url(#icl)">
<ellipse cx="2321.1" cy="696.4" rx="3.9" ry="2.6" fill="#1fd69b"/>
<polyline points="2343.3,696.2 2348.9,692.4 2354.5,696.2" fill="none" stroke="#cfcdd3" stroke-width="1"/>
<path d="M2370.2 696.3 A7.2 6 0 0 1 2383.6 696.3" fill="none" stroke="#cfcdd3" stroke-width="1"/>
<rect x="2376.3" y="695.2" width="1.5" height="1" fill="#9a98a0"/>
</g>
<line x1="2124.5" y1="696.4" x2="2215" y2="696.4" stroke="#d2d0d6" stroke-width="0.9" stroke-dasharray="1.6 1.4" opacity="0.55"/>
<rect x="2220.2" y="489" width="1.5" height="15" fill="#38353f"/><rect x="2220.2" y="513" width="1.5" height="128" fill="#38353f"/>
<rect x="1670.2" y="494.2" width="2.2" height="7.3" fill="#38353f" opacity="0.75"/>
</g>
<svg x="98" y="595" width="200" height="16" overflow="hidden"><text x="6.3" y="19" fill="#d4d2d8" style="font-family:'Liberation Sans',sans-serif;font-size:11px">100%</text><text x="42.3" y="19" fill="#d4d2d8" style="font-family:'Liberation Sans',sans-serif;font-size:11.2px">PostgreSQL</text></svg>
</svg>
</body></html>
